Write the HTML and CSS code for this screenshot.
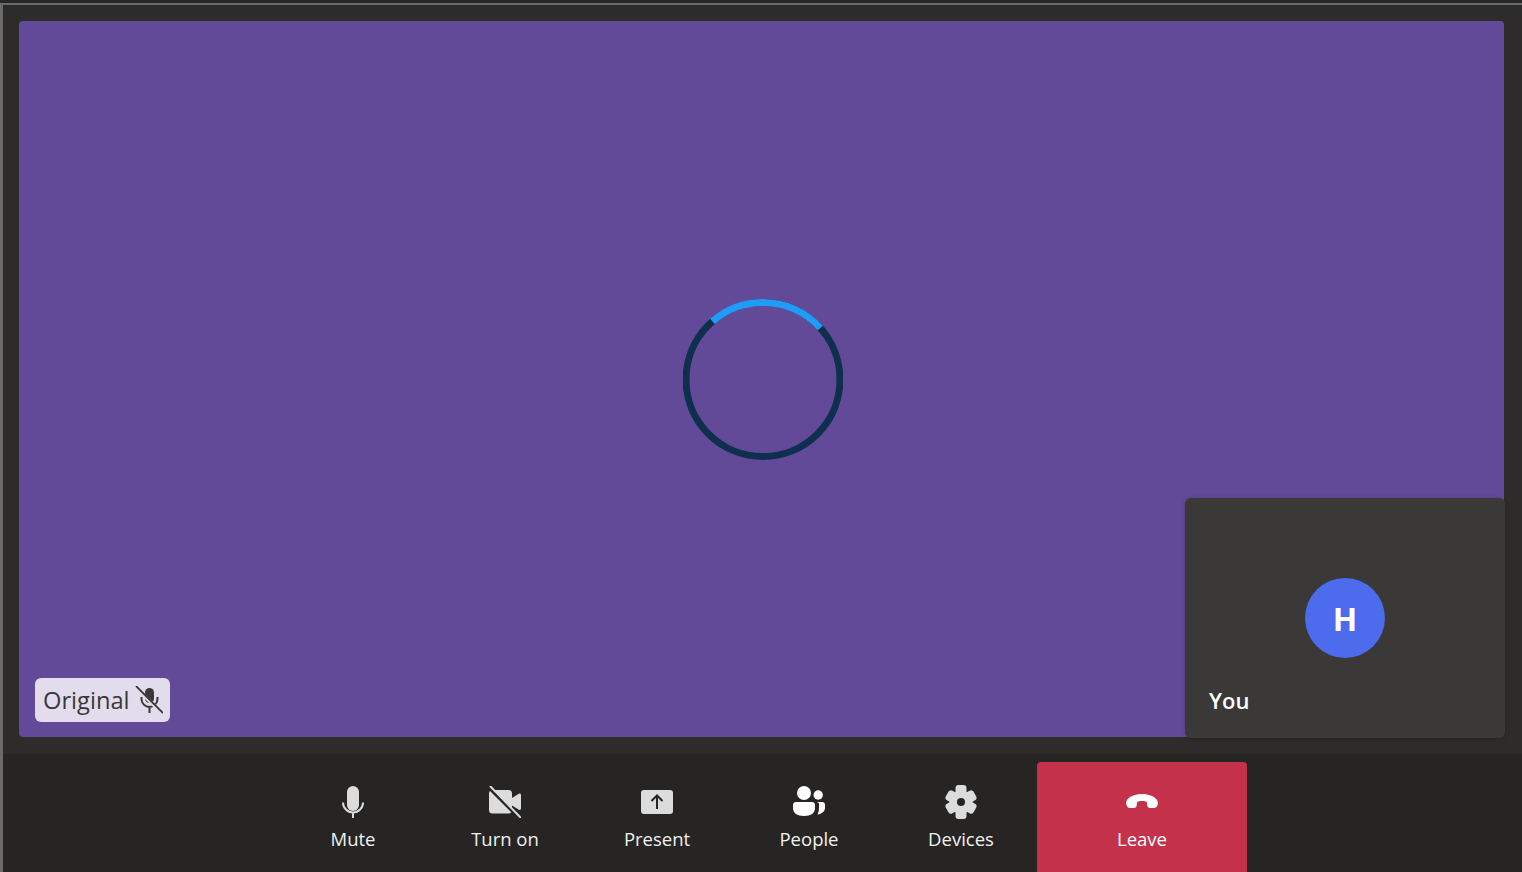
FILE: index.html
```html
<!DOCTYPE html>
<html lang="en">
<head>
<meta charset="UTF-8">
<meta name="viewport" content="width=device-width, initial-scale=1.0">
<title>Call</title>
<link rel="stylesheet" href="styles.css">
</head>
<body>

<div class="window">

<!-- Stage -->
<div class="stage">
    <div class="video">
        <svg class="spinner" width="160" height="162" viewBox="0 0 160 162">
            <circle class="spinner-track" cx="80" cy="81.500" r="77"/>
            <circle class="spinner-head" cx="80" cy="81.500" r="77" pathLength="360" stroke-dasharray="89 271" stroke-dashoffset="41" transform="rotate(-90 80 81.500)"/>
        </svg>
        <div class="name-tag">
            <span>Original</span>
            <svg width="28" height="28" viewBox="0 0 28 28">
                <rect x="10" y="2" width="9" height="15" rx="4.5" fill="#393837"/>
                <path d="M6.500 11v2a8 8 0 0 0 16 0v-2M14.500 21v6" fill="none" stroke="#393837" stroke-width="2"/>
                <path d="M1 2l27 26" stroke="#e2dcec" stroke-width="3.500"/>
                <path d="M1 0l27 27" stroke="#393837" stroke-width="1.800"/>
            </svg>
        </div>
    </div>
    <div class="self-view">
        <div class="avatar">H</div>
        <div class="self-name">You</div>
    </div>
</div>

<!-- Call controls -->
<div class="toolbar">
    <button class="tool">
        <svg width="32" height="32" viewBox="0 0 32 32">
            <rect x="10" y="0" width="12" height="25" rx="6" fill="#dcdcdc"/>
            <path d="M6 16.500a10 10 0 0 0 20 0M16 27v5" fill="none" stroke="#dcdcdc" stroke-width="2"/>
        </svg>
        <span>Mute</span>
    </button>
    <button class="tool">
        <svg width="32" height="32" viewBox="0 0 32 32">
            <rect x="0" y="4" width="23" height="23.500" rx="3.500" fill="#dcdcdc"/>
            <path d="M23 12l6.800-4.200c1-.6 2.200 0 2.200 1.200v13.500c0 1.200-1.200 1.800-2.200 1.200L23 19.500z" fill="#dcdcdc"/>
            <path d="M0 1.500l30.500 30.500" stroke="#262524" stroke-width="3.500"/>
            <path d="M1 0l31 32" stroke="#dcdcdc" stroke-width="2"/>
        </svg>
        <span>Turn on</span>
    </button>
    <button class="tool">
        <svg width="32" height="32" viewBox="0 0 32 32">
            <rect x="0" y="4" width="32" height="24" rx="3" fill="#dcdcdc"/>
            <path d="M16 23V9.500M10.500 15L16 9.500l5.500 5.500" fill="none" stroke="#262524" stroke-width="2"/>
        </svg>
        <span>Present</span>
    </button>
    <button class="tool">
        <svg width="32" height="32" viewBox="0 0 32 32">
            <circle cx="11" cy="7" r="7" fill="#fff"/>
            <circle cx="25.200" cy="9" r="4.700" fill="#fff"/>
            <path d="M3 16h16a3 3 0 0 1 3 3v3c0 5-4 8-11 8S0 27 0 22v-3a3 3 0 0 1 3-3z" fill="#fff"/>
            <path d="M24 16h5a3 3 0 0 1 3 3v2.500c0 4-3 6.500-7.500 7 1-2 1.500-4.500 1.500-7.500v-3c0-.7-.2-1.300-2-2z" fill="#fff"/>
        </svg>
        <span>People</span>
    </button>
    <button class="tool">
        <svg class="gear" width="32" height="32" viewBox="0 0 32 32">
            <circle cx="16" cy="16" r="11.500" fill="#dcdcdc"/>
            <rect x="10.500" y="-1" width="11" height="34" rx="3" fill="#dcdcdc"/>
            <rect x="10.500" y="0" width="11" height="32" rx="3" fill="#dcdcdc" transform="rotate(60 16 16)"/>
            <rect x="10.500" y="0" width="11" height="32" rx="3" fill="#dcdcdc" transform="rotate(120 16 16)"/>
            <circle cx="16" cy="16" r="4" fill="#262524"/>
        </svg>
        <span>Devices</span>
    </button>
    <button class="tool leave">
        <svg width="32" height="32" viewBox="0 0 32 32">
            <path d="M16 8c7 0 12.500 2.500 15 6 1 1.500 1.200 3.500.5 5-.5 1.800-1.800 3-3.500 3h-4c-1.500 0-2.500-1-2.700-2.500l-.3-2.500c-.2-1-1-1.500-2-1.700-2-.3-4-.3-6 0-1 .2-1.800.7-2 1.700l-.3 2.500C10.500 21 9.500 22 8 22H4c-1.700 0-3-1.200-3.500-3-.7-1.500-.5-3.500.5-5C3.500 10.500 9 8 16 8z" fill="#fff"/>
        </svg>
        <span>Leave</span>
    </button>
</div>

</div>

</body>
</html>
```

FILE: styles.css
```css
* {
box-sizing: border-box;
}
html, body {
height: 100%;
}
body {
margin: 0;
font-family: "Open Sans", "Noto Sans", sans-serif;
background-color: #2d2c2b;
overflow: hidden;
}
.window {
height: 872px;
display: flex;
flex-direction: column;
padding-top: 3px;
background-color: #292828;
}
.stage {
height: 751px;
flex-shrink: 0;
padding: 16px 18px 16px 16px;
border-top: 2px solid #6a6a6a;
border-left: 3px solid #6a6a6a;
background-color: #2d2c2b;
position: relative;
}
.video {
height: 716px;
border-radius: 4px;
background-color: #634a99;
display: flex;
align-items: center;
justify-content: center;
}
.spinner {
display: block;
margin-left: 2px;
}
.spinner circle {
fill: none;
stroke-width: 7;
}
.spinner-track {
stroke: #0e2f4e;
}
.spinner-head {
stroke: #209cf6;
}
.name-tag {
position: absolute;
left: 32px;
top: 673px;
height: 44px;
width: 135px;
padding: 0 0 0 8px;
display: flex;
align-items: center;
gap: 5px;
border-radius: 6px;
background-color: #e2dcec;
color: #393837;
font-size: 23.7px;
}
.self-view {
position: absolute;
right: 17px;
top: 493px;
width: 320px;
height: 240px;
border-radius: 6px;
background-color: #3a3938;
box-shadow: 0 0 4px rgba(0,0,0,0.2);
}
.avatar {
position: absolute;
left: 120px;
top: 80px;
width: 80px;
height: 80px;
border-radius: 50%;
background-color: #4c6bed;
color: #fff;
font-size: 32px;
font-weight: 700;
display: flex;
align-items: center;
justify-content: center;
}
.self-name {
position: absolute;
left: 24px;
top: 187px;
color: #fff;
font-size: 22px;
font-weight: 600;
}
.toolbar {
flex: 1;
display: flex;
padding-left: 274px;
padding-top: 8px;
border-left: 3px solid #6a6a6a;
background-color: #262524;
}
.tool {
width: 152px;
height: 110px;
padding: 24px 0 0;
border: none;
background: none;
color: #f0f0f0;
font-family: inherit;
font-size: 18.5px;
display: flex;
flex-direction: column;
align-items: center;
cursor: pointer;
}
.tool svg {
display: block;
margin-bottom: 8px;
}
.gear {
overflow: visible;
}
.leave {
width: 210px;
border-radius: 4px 4px 0 0;
background-color: #c4314b;
color: #fff;
}
```
